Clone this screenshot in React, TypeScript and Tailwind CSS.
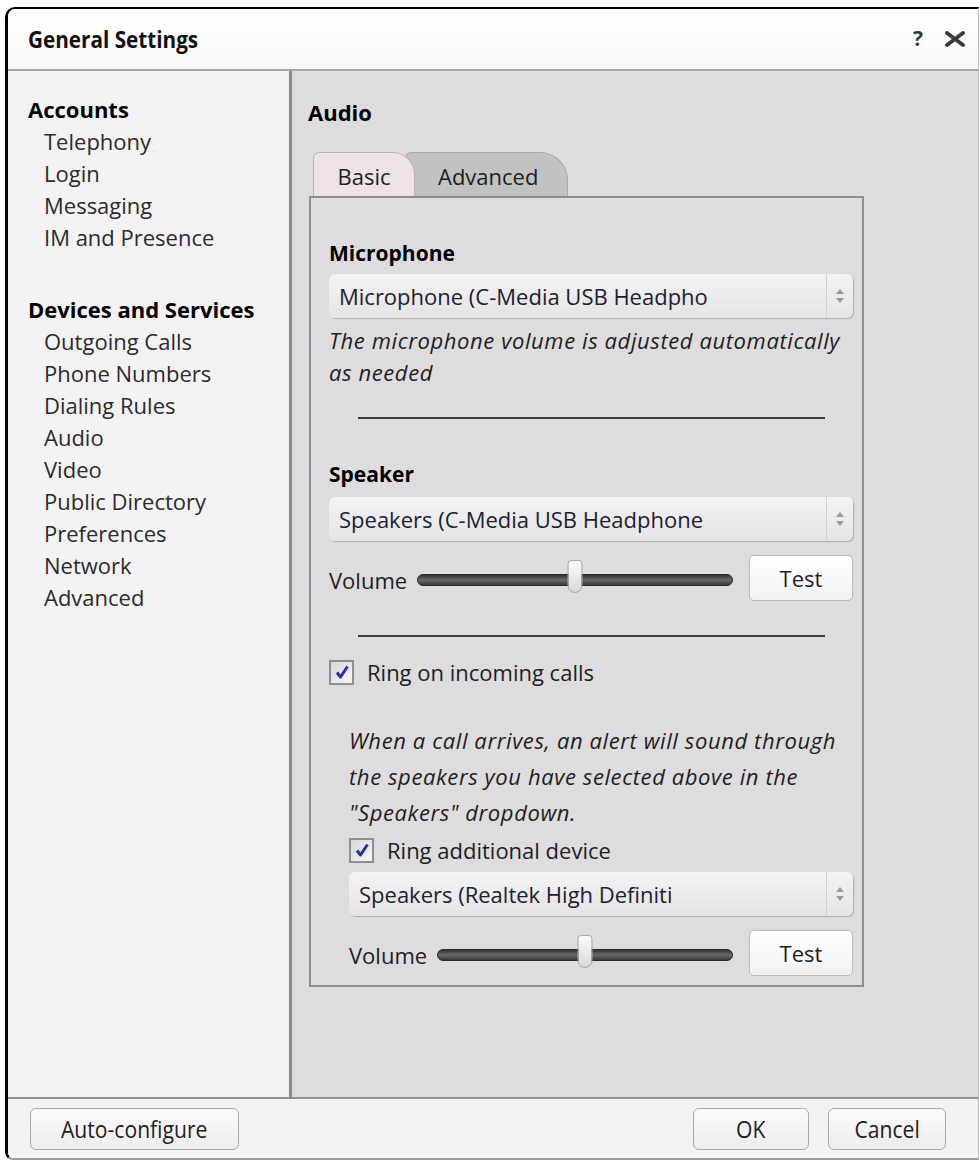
import type { ReactNode } from "react";

const ACCOUNTS = ["Telephony", "Login", "Messaging", "IM and Presence"];
const DEVICES = [
  "Outgoing Calls",
  "Phone Numbers",
  "Dialing Rules",
  "Audio",
  "Video",
  "Public Directory",
  "Preferences",
  "Network",
  "Advanced",
];

export default function App() {
  return (
    <div className="h-[1166px] w-[979px] bg-white pl-[5px] pt-[7px] font-['Open_Sans','Noto_Sans',sans-serif] text-[22px] text-[#1e1e1e]">
      <div className="flex h-[1153px] w-[974px] flex-col overflow-hidden rounded-tl-[10px] rounded-bl-[8px] border-t-2 border-r border-b-2 border-l-[3px] border-t-black border-r-[#b8b8b8] border-b-[#9c9c9c] border-l-black">
        <TitleBar />
        <div className="flex min-h-0 flex-1">
          <Sidebar />
          <AudioPage />
        </div>
        <Footer />
      </div>
    </div>
  );
}

function TitleBar() {
  return (
    <div className="flex h-[62px] shrink-0 items-center justify-between border-b-2 border-[#a4a4a4] bg-linear-to-b from-white to-[#f7f7f7] pl-[20px] pr-[11px]">
      <span className="inline-block origin-left scale-x-[0.9] text-[23px] font-bold text-[#111]">General Settings</span>
      <div className="flex items-center gap-[20px] text-[#3a3a3a]">
        <span className="text-[21px] font-bold">?</span>
        <svg viewBox="0 0 24 16" className="h-[16px] w-[24px]">
          <path d="M4 2 L20 14 M20 2 L4 14" stroke="currentColor" strokeWidth="3.8" strokeLinecap="round" />
        </svg>
      </div>
    </div>
  );
}

function Sidebar() {
  return (
    <nav className="w-[284px] shrink-0 border-r-[3px] border-[#8a8a8a] bg-[#f5f2f5] pl-[20px] pt-[22px] leading-[32px]">
      <NavGroup title="Accounts" items={ACCOUNTS} />
      <div className="mt-[40px]">
        <NavGroup title="Devices and Services" items={DEVICES} />
      </div>
    </nav>
  );
}

function NavGroup({ title, items }: { title: string; items: string[] }) {
  return (
    <div>
      <div className="font-bold text-black">{title}</div>
      {items.map((item) => (
        <div key={item} className="pl-[16px] text-[#2b2b2b]">
          {item}
        </div>
      ))}
    </div>
  );
}

function AudioPage() {
  return (
    <main className="flex-1 bg-[#dedcde] pl-[16px] pt-[25px]">
      <h1 className="text-[22px] font-bold leading-[32px] text-black">Audio</h1>

      <div className="ml-[5px] mt-[24px] flex h-[44px]">
        <div className="relative z-10 flex w-[102px] items-center justify-center rounded-tl-[6px] rounded-tr-[22px] border border-b-0 border-[#b9b1b3] bg-[#ece3e5] pt-[4px]">
          Basic
        </div>
        <div className="-ml-[10px] flex w-[163px] items-center rounded-tl-[6px] rounded-tr-[28px] border border-b-0 border-[#a9a9a9] bg-[#c2c2c2] pl-[32px] pt-[4px]">
          Advanced
        </div>
      </div>

      <section className="ml-[1px] w-[555px] border-2 border-[#8e8e93] pb-[9px] pl-[18px] pr-[9px]">
        <h2 className="mt-[39px] text-[21px] font-bold leading-[32px] text-black">Microphone</h2>
        <div className="mt-[5px]">
          <Select value="Microphone (C-Media USB Headpho" />
        </div>
        <p className="mt-[6px] italic leading-[32px] tracking-[0.6px]">
          The microphone volume is adjusted automatically
          <br />
          as needed
        </p>
        <Rule className="mt-[29px]" />

        <h2 className="mt-[39px] text-[21px] font-bold leading-[32px] text-black">Speaker</h2>
        <div className="mt-[7px]">
          <Select value="Speakers (C-Media USB Headphone" />
        </div>
        <VolumeRow className="mt-[14px]" />
        <Rule className="mt-[34px]" />

        <CheckRow className="mt-[19px]" label="Ring on incoming calls" />

        <div className="pl-[20px]">
          <p className="mt-[34px] italic leading-[36px] tracking-[0.6px]">
            When a call arrives, an alert will sound through
            <br />
            the speakers you have selected above in the
            <br />
            "Speakers" dropdown.
          </p>
          <CheckRow className="mt-[4px]" label="Ring additional device" />
          <div className="mt-[6px]">
            <Select value="Speakers (Realtek High Definiti" />
          </div>
          <VolumeRow className="mt-[14px]" />
        </div>
      </section>
    </main>
  );
}

function Rule({ className }: { className: string }) {
  return <div className={`${className} ml-[29px] h-[2px] w-[467px] bg-[#3c3c3c]`} />;
}

function Select({ value }: { value: string }) {
  return (
    <div className="flex h-[44px] items-center rounded-[6px] bg-linear-to-b from-[#f5f3f5] to-[#e5e3e5] shadow-[1px_1px_1px_rgba(0,0,0,0.22)]">
      <span className="flex-1 pl-[10px] text-[#1b2132]">{value}</span>
      <span className="flex h-full w-[27px] items-center justify-center border-l border-[#d2d0d2]">
        <svg viewBox="0 0 10 16" className="h-[16px] w-[10px]">
          <path d="M5 1 L9 6 H1 Z M5 15 L9 10 H1 Z" fill="#9a9a9c" />
        </svg>
      </span>
    </div>
  );
}

function VolumeRow({ className }: { className: string }) {
  return (
    <div className={`${className} flex h-[46px] items-center`}>
      <span className="pt-[4px]">Volume</span>
      <div className="relative ml-[10px] mt-[4px] h-[12px] flex-1 rounded-full border border-[#2a2a2a] bg-linear-to-b from-[#333] via-[#6a6a6a] to-[#383838]">
        <div className="absolute left-1/2 top-[-15px] h-[33px] w-[15px] -translate-x-1/2 rounded-t-[4px] rounded-b-[8px] border border-[#a6a6a6] bg-linear-to-b from-[#fbfbfb] to-[#d9d9d9]" />
      </div>
      <Button className="ml-[16px] h-[46px] w-[104px] rounded-[5px] border-[#b9b9b9] bg-linear-to-b from-white to-[#f1f1f1]">
        Test
      </Button>
    </div>
  );
}

function CheckRow({ className, label }: { className: string; label: string }) {
  return (
    <label className={`${className} flex h-[32px] items-center gap-[13px]`}>
      <span className="flex h-[25px] w-[25px] items-center justify-center border-2 border-[#8f8f8f] bg-linear-to-br from-[#d6d6dc] to-[#f7f7f9]">
        <svg viewBox="0 0 16 16" className="h-[16px] w-[16px]">
          <path d="M3 8.5 L6.5 13 L13.5 2.5" stroke="#2c309c" strokeWidth="3" fill="none" strokeLinejoin="round" />
        </svg>
      </span>
      <span>{label}</span>
    </label>
  );
}

function Button({ className, children }: { className: string; children: ReactNode }) {
  return <button className={`${className} flex items-center justify-center border text-[#1e1e1e]`}>{children}</button>;
}

function Footer() {
  return (
    <footer className="flex h-[61px] shrink-0 items-center border-t-2 border-[#8f8f8f] bg-[#f5f2f5] pl-[22px] pr-[32px]">
      <FooterButton className="w-[209px]">Auto-configure</FooterButton>
      <div className="flex-1" />
      <FooterButton className="w-[116px]">OK</FooterButton>
      <FooterButton className="ml-[19px] w-[118px]">Cancel</FooterButton>
    </footer>
  );
}

function FooterButton({ className, children }: { className: string; children: ReactNode }) {
  return (
    <button
      className={`${className} flex h-[42px] items-center justify-center rounded-[6px] border border-[#a9a9a9] bg-linear-to-b from-[#fcfafc] to-[#eeecee] text-[24px] text-[#1e1e1e]`}
    >
      <span className="inline-block scale-x-[0.88]">{children}</span>
    </button>
  );
}
